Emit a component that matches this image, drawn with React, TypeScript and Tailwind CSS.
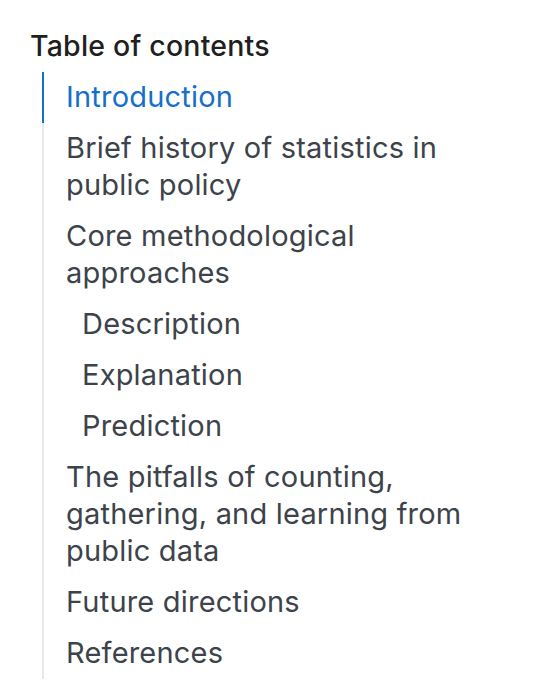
import React from "react";

type Item = { label: string; sub?: boolean; active?: boolean };

const items: Item[] = [
  { label: "Introduction", active: true },
  { label: "Brief history of statistics in public policy" },
  { label: "Core methodological approaches" },
  { label: "Description", sub: true },
  { label: "Explanation", sub: true },
  { label: "Prediction", sub: true },
  { label: "The pitfalls of counting, gathering, and learning from public data" },
  { label: "Future directions" },
  { label: "References" },
];

export default function App() {
  return (
    <div
      className="w-[552px] h-[698px] bg-white pl-[30px] pt-[29px]"
      style={{ fontFamily: "Inter, 'Noto Sans', sans-serif" }}
    >
      <h2 className="text-[28.5px] leading-[34px] font-medium text-[#1f1f1f] tracking-[0.2px]">
        Table of contents
      </h2>
      <ul className="mt-[9px] ml-[12px] w-[432px] border-l-2 border-[#e8e8e8]">
        {items.map((it) => (
          <li
            key={it.label}
            className={
              it.active
                ? "-ml-[2px] border-l-2 border-[#1470c8] pt-[6px] pb-[8px] pl-[22px] text-[29px] leading-[37px] tracking-[0.2px] text-[#1470c8]"
                : it.sub
                ? "pt-[6px] pb-[8px] pl-[38px] text-[29px] leading-[37px] tracking-[0.2px] text-[#3c434b]"
                : "pt-[6px] pb-[8px] pl-[22px] text-[29px] leading-[37px] tracking-[0.2px] text-[#3c434b]"
            }
          >
            {it.label}
          </li>
        ))}
      </ul>
    </div>
  );
}
